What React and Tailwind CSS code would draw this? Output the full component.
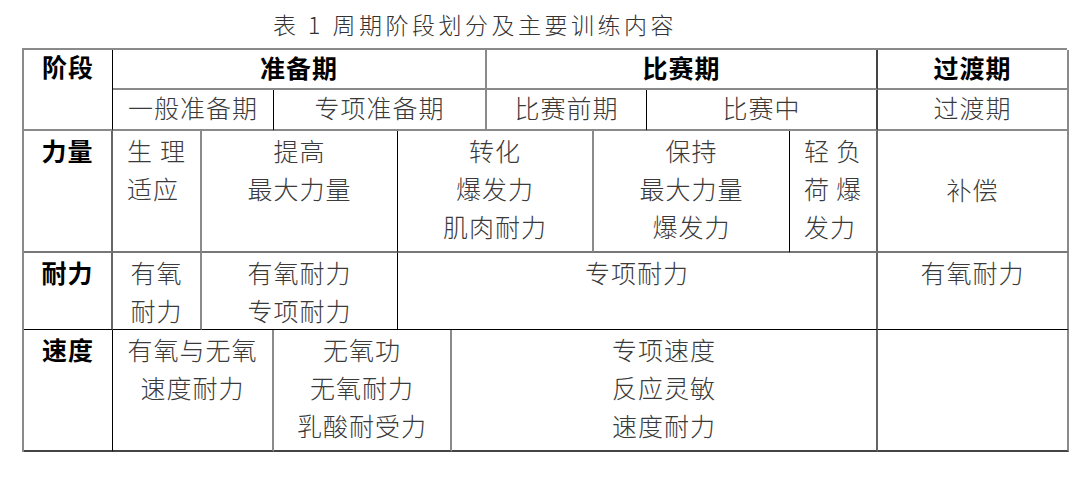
import React from 'react';

const G = 'border-[#8a8a8a]';

function Lines({ lines }) {
  return lines.map((l, i) =>
    Array.isArray(l) ? (
      <div key={i} className="flex justify-between w-full leading-[38px]">
        {l.map((c) => <span key={c}>{c}</span>)}
      </div>
    ) : (
      <div key={i} className="leading-[38px]">{l}</div>
    )
  );
}

// one table cell; border = right/bottom edge classes
function Cell({ pos, border, head, lines = [], left, middle, line }) {
  return (
    <div
      className={`${pos} ${border} flex flex-col ${middle ? 'justify-center pb-[4px]' : line ? 'justify-center pb-[5px]' : 'pt-0'} ${
        left ? 'items-start px-[14px]' : 'items-center text-center'
      } ${head ? 'text-black font-bold' : 'text-[#3a3a3a] font-light'}`}
    >
      {line ? <div className="leading-[32px]">{line}</div> : <Lines lines={lines} />}
    </div>
  );
}

export default function App() {
  return (
    <div className="w-[1080px] h-[479px] bg-white font-['Noto_Sans_CJK_SC','Noto_Sans',sans-serif] text-[25px] tracking-[1px]">
      <div className="pl-[273px] pt-[8px] h-[48px] text-[23px] tracking-[3.5px] text-[#333] font-light leading-[32px]">
        表 1 周期阶段划分及主要训练内容
      </div>

      <div className={`ml-[22px] w-[1045px] grid grid-cols-[89px_89px_72px_124px_54px_35px_107px_53px_143px_88px_191px] grid-rows-[40px_41px_122px_77px_122px] border-l-2 border-t-2 ${G}`}>
        {/* header row 1 */}
        <div className="col-start-1 col-end-2 row-start-1 row-end-3 border-r border-b-2 border-r-black border-b-[#8a8a8a] text-center text-black font-bold leading-[33px]">
          阶段
        </div>
        <Cell pos="col-start-2 col-end-7 row-start-1" border={`border-r-2 border-b-2 ${G}`} head line="准备期" />
        <Cell pos="col-start-7 col-end-11 row-start-1" border="border-r-2 border-b-2 border-r-[#444] border-b-[#8a8a8a]" head line="比赛期" />
        <Cell pos="col-start-11 col-end-12 row-start-1" border={`border-r-2 border-b-2 ${G}`} head line="过渡期" />

        {/* header row 2 */}
        <Cell pos="col-start-2 col-end-4 row-start-2" border="border-r border-b-2 border-r-black border-b-[#8a8a8a]" line="一般准备期" />
        <Cell pos="col-start-4 col-end-7 row-start-2" border={`border-r-2 border-b-2 ${G}`} line="专项准备期" />
        <Cell pos="col-start-7 col-end-9 row-start-2" border="border-r border-b-2 border-r-black border-b-[#8a8a8a]" line="比赛前期" />
        <Cell pos="col-start-9 col-end-11 row-start-2" border="border-r-2 border-b-2 border-r-[#444] border-b-[#8a8a8a]" line="比赛中" />
        <Cell pos="col-start-11 col-end-12 row-start-2" border={`border-r-2 border-b-2 ${G}`} line="过渡期" />

        {/* 力量 */}
        <Cell pos="col-start-1 col-end-2 row-start-3" border="border-r-2 border-b-2 border-r-[#666] border-b-[#777]" head lines={['力量']} />
        <Cell pos="col-start-2 col-end-3 row-start-3" border="border-r-2 border-b-2 border-r-[#8a8a8a] border-b-[#777]" left lines={[['生', '理'], '适应']} />
        <Cell pos="col-start-3 col-end-5 row-start-3" border="border-r border-b-2 border-r-black border-b-[#777]" lines={['提高', '最大力量']} />
        <Cell pos="col-start-5 col-end-8 row-start-3" border="border-r-2 border-b-2 border-r-[#8a8a8a] border-b-[#777]" lines={['转化', '爆发力', '肌肉耐力']} />
        <Cell pos="col-start-8 col-end-10 row-start-3" border="border-r border-b-2 border-r-black border-b-[#777]" lines={['保持', '最大力量', '爆发力']} />
        <Cell pos="col-start-10 col-end-11 row-start-3" border="border-r-2 border-b-2 border-r-[#666] border-b-[#777]" left lines={[['轻', '负'], ['荷', '爆'], '发力']} />
        <Cell pos="col-start-11 col-end-12 row-start-3" border="border-r-2 border-b-2 border-r-[#8a8a8a] border-b-[#777]" middle lines={['补偿']} />

        {/* 耐力 */}
        <Cell pos="col-start-1 col-end-2 row-start-4" border="border-r-2 border-b border-r-[#666] border-b-black" head lines={['耐力']} />
        <Cell pos="col-start-2 col-end-3 row-start-4" border="border-r-2 border-b border-r-[#8a8a8a] border-b-black" lines={['有氧', '耐力']} />
        <Cell pos="col-start-3 col-end-5 row-start-4" border="border-r border-b border-r-black border-b-black" lines={['有氧耐力', '专项耐力']} />
        <Cell pos="col-start-5 col-end-11 row-start-4" border="border-r-2 border-b border-r-[#666] border-b-black" lines={['专项耐力']} />
        <Cell pos="col-start-11 col-end-12 row-start-4" border="border-r-2 border-b border-r-[#8a8a8a] border-b-black" lines={['有氧耐力']} />

        {/* 速度 */}
        <Cell pos="col-start-1 col-end-2 row-start-5" border="border-r border-b-2 border-r-black border-b-[#444]" head lines={['速度']} />
        <Cell pos="col-start-2 col-end-4 row-start-5" border="border-r-2 border-b-2 border-r-[#8a8a8a] border-b-[#444]" lines={['有氧与无氧', '速度耐力']} />
        <Cell pos="col-start-4 col-end-6 row-start-5" border="border-r-2 border-b-2 border-r-[#8a8a8a] border-b-[#444]" lines={['无氧功', '无氧耐力', '乳酸耐受力']} />
        <Cell pos="col-start-6 col-end-11 row-start-5" border="border-r-2 border-b-2 border-r-[#666] border-b-[#444]" lines={['专项速度', '反应灵敏', '速度耐力']} />
        <Cell pos="col-start-11 col-end-12 row-start-5" border="border-r-2 border-b-2 border-r-[#8a8a8a] border-b-[#444]" lines={[]} />
      </div>
    </div>
  );
}
